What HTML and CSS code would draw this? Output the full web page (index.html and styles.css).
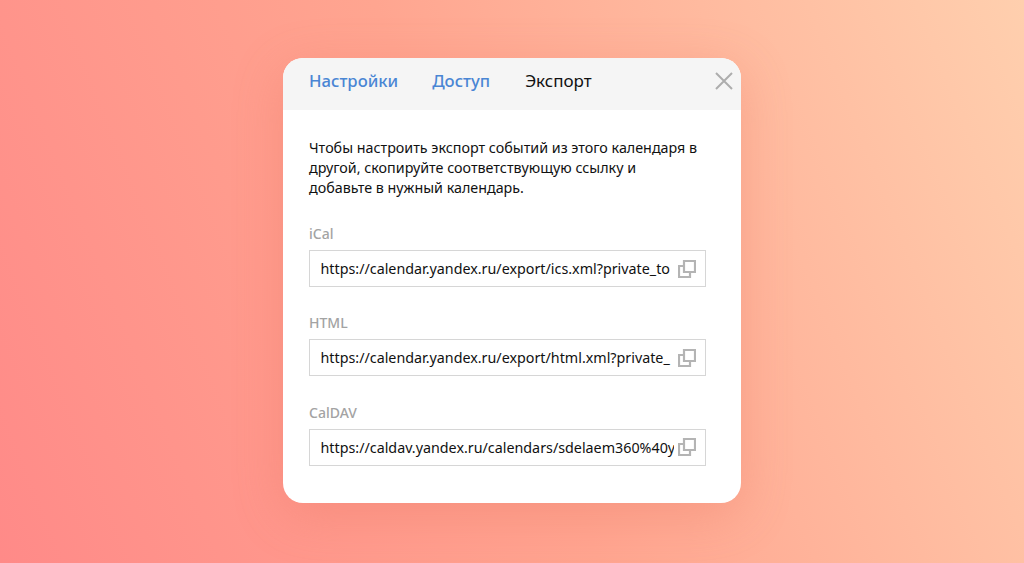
FILE: index.html
```html
<!DOCTYPE html>
<html lang="ru">

<head>
    <meta charset="UTF-8">
    <meta name="viewport" content="width=device-width, initial-scale=1.0">
    <title>Экспорт</title>
    <link rel="stylesheet" href="styles.css">
</head>

<body>
    <div class="modal">
        <div class="modal-head">
            <a class="tab">Настройки</a>
            <a class="tab">Доступ</a>
            <a class="tab tab-active">Экспорт</a>
            <svg class="close-icon" width="18" height="18" viewBox="0 0 18 18">
                <path d="M1 1L17 17M17 1L1 17" />
            </svg>
        </div>
        <div class="modal-body">
            <p class="intro">Чтобы настроить экспорт событий из этого календаря в другой, скопируйте соответствующую ссылку и добавьте в нужный календарь.</p>

            <div class="field">
                <div class="field-label">iCal</div>
                <div class="field-box">
                    <span class="field-value">https://calendar.yandex.ru/export/ics.xml?private_to</span>
                    <svg class="copy-icon" width="18" height="18" viewBox="0 0 18 18">
                        <path d="M6 1H17V12H6Z" />
                        <path d="M6 6H1V17H12V12" />
                    </svg>
                </div>
            </div>

            <div class="field">
                <div class="field-label">HTML</div>
                <div class="field-box">
                    <span class="field-value">https://calendar.yandex.ru/export/html.xml?private_</span>
                    <svg class="copy-icon" width="18" height="18" viewBox="0 0 18 18">
                        <path d="M6 1H17V12H6Z" />
                        <path d="M6 6H1V17H12V12" />
                    </svg>
                </div>
            </div>

            <div class="field">
                <div class="field-label">CalDAV</div>
                <div class="field-box">
                    <span class="field-value">https://caldav.yandex.ru/calendars/sdelaem360%40y</span>
                    <svg class="copy-icon" width="18" height="18" viewBox="0 0 18 18">
                        <path d="M6 1H17V12H6Z" />
                        <path d="M6 6H1V17H12V12" />
                    </svg>
                </div>
            </div>
        </div>
    </div>
</body>

</html>
```

FILE: styles.css
```css
* {
    margin: 0;
    padding: 0;
    box-sizing: border-box;
    font-family: 'Noto Sans', 'Open Sans', sans-serif;
}

body {
    background: linear-gradient(68deg, #ff8a88 0%, #ffa590 48%, #ffcfae 100%);
    height: 100vh;
    overflow: hidden;
    padding-top: 58px;
}

.modal {
    width: 458px;
    height: 445px;
    margin-left: 283px;
    background-color: #fff;
    border-radius: 20px;
    overflow: hidden;
    box-shadow: 0 12px 50px rgba(230, 110, 90, 0.3);
}

.modal-head {
    height: 52px;
    background-color: #f5f5f5;
    display: flex;
    align-items: center;
    gap: 34px;
    padding: 0 8px 7px 26px;
}

.tab {
    font-size: 16.7px;
    font-weight: 500;
    color: #4a86d4;
}

.tab-active {
    margin-left: 1px;
    font-weight: 400;
    font-size: 17px;
    color: #111;
}

.close-icon {
    margin-left: auto;
    margin-top: 1px;
}

.close-icon path {
    fill: none;
    stroke: #adadad;
    stroke-width: 2;
}

.modal-body {
    padding: 28px 35px 0 26px;
}

.intro {
    font-size: 14.3px;
    line-height: 20px;
    color: #111;
    max-width: 390px;
    margin-bottom: 26px;
}

.field {
    margin-bottom: 26.3px;
}

.field-label {
    font-size: 14px;
    line-height: 20px;
    font-weight: 500;
    color: #a3a3a3;
    margin-bottom: 6px;
}

.field-box {
    height: 37px;
    border: 1px solid #d6d6d6;
    display: flex;
    align-items: center;
    padding: 0 9px 0 10.5px;
    gap: 4px;
}

.field-value {
    flex: 1;
    font-size: 14.3px;
    color: #111;
    white-space: nowrap;
    overflow: hidden;
}

.copy-icon {
    flex-shrink: 0;
}

.copy-icon path {
    fill: none;
    stroke: #b4b4b4;
    stroke-width: 2.2;
}
```
